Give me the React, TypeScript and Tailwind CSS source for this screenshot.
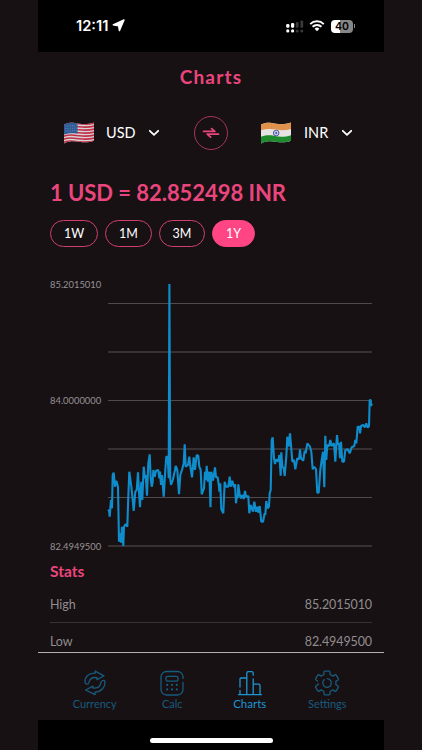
import type { ReactNode } from "react";

const LINE =
  "108,511 109,510 109.7,516.7 111,500 112,508.3 112.7,475 113.7,472.7 115,486.7 116.3,480.7 118,486.7 119,541.7 120.3,533 121,542.7 122,526.7 123.3,546 124,526.7 125.7,524 127.3,526.7 128.3,496.7 129.3,471.7 131.3,486.7 132.7,500 133.7,511 135.3,491.7 136.7,490 138,472.3 139,491.7 140,507.3 141.3,481.7 142.3,500 143.7,466.7 145,478.3 145.7,475 147,495.7 148.3,463.3 149.7,454.3 150.7,478.3 151.7,486.7 152.7,481.7 153.3,470 154.7,476.7 156,470.7 158.3,470 159.3,478.3 160,471.7 161,485 162,475 163.7,496.7 165.3,470 166.3,456.7 167.7,456.7 168.7,478.3 169.4,284 170.2,478.3 171,485 173,479.3 175,470 175.7,466 177.3,470 179,494.3 180.3,475 182,470 183.7,463.3 184.7,444.3 185.7,466.7 188,465 189.3,456.7 190.3,466 192,477.3 193.7,457.3 195,470 196.7,455 198.3,456 199.3,466.7 200.7,470 201.7,494.3 204,488.3 205,471.7 205.7,480 206.7,465.7 207.7,481.7 209.3,471.7 210.5,507.3 211.3,471.7 213,480.7 215,467.3 216,477.3 217.7,477.3 219,486.7 219.4,491.7 220.3,483.3 221.3,509.3 223.3,513.3 224.7,481.7 226,486.7 228.3,486.7 229.7,476.7 230.7,486.7 232.3,480.7 234,487.3 235,484 236,503.3 237,495 237.7,498.3 238.3,484.3 239.7,495 241,498.3 242.3,495 243.7,499 245,491 246,496.7 248.3,496 249.3,513.3 250.7,505 253,511.7 254.3,501.7 256,511.7 257.3,506.7 258.3,512.7 259.7,506 261.3,521.7 263,521.7 264.7,513.3 265.3,515 266.3,501 267.7,508.3 269,506.7 269.7,493.3 270.7,490 271.7,440 272.7,437.3 274,458.3 275,464 276.3,459.3 278.3,461.7 279.3,455 280.7,475.7 281.3,452.3 282.3,466.7 283.7,468.3 284.7,476 286.3,456.7 287.3,436.7 288.7,446.7 290,433.3 291,445 292.3,461.7 294,460 295.3,469.3 297.3,458.3 299,459.3 300,449.3 301,458.3 303.3,460.7 304.7,450.7 305.7,453.3 307.3,443.3 310,446.7 311.3,451.7 312.7,469.3 314.3,466.7 316,469.3 317.3,492.7 318.7,492.7 320.3,470 321.7,460 323,451.7 324.3,487.3 325.3,435.7 326.3,460 327.3,445 329.3,446 330.3,440 331.7,446 334,443.3 335.3,461.7 337,435 338,445 339,443.3 340,458.3 341,441.7 342.3,461.7 344,461.7 345.3,450 347.7,449.3 349.7,453.3 351.7,447.3 354.3,446 355.3,440 356.3,443.3 357.7,426.7 359.3,426.7 360,433.3 361,426 363,425 365,427.3 366.3,423.3 367.7,427.7 369,426 369.7,400 370.7,400 371,406 372,403.3";

const ranges = [
  { label: "1W", width: "w-[48px]" },
  { label: "1M", width: "w-[47px]" },
  { label: "3M", width: "w-[46px]" },
  { label: "1Y", width: "w-[43px]", active: true },
];

const FLAG_SHAPE = "M1 2.6C7 -0.6 12 1 16 1.8S26 2.6 31 0.6V18.8C26 21 20 20.4 16 19.8S7 18.6 1 21.4Z";

const UsFlag = () => (
  <svg width="32" height="22" viewBox="0 0 32 22">
    <clipPath id="us">
      <path d={FLAG_SHAPE} />
    </clipPath>
    <g clipPath="url(#us)">
      <rect width="32" height="22" fill="#d8d3d6" />
      {[0, 1, 2, 3, 4, 5, 6].map((i) => (
        <path
          key={i}
          d={`M0 ${2.4 + i * 3}C7 ${-0.2 + i * 3} 12 ${1.4 + i * 3} 16 ${1.8 + i * 3}S26 ${2.8 + i * 3} 32 ${0.8 + i * 3}`}
          fill="none"
          stroke="#c23046"
          strokeWidth="1.6"
        />
      ))}
      <path d="M0 0H14.5V11.6C10 11 5 10.8 0 13Z" fill="#2f5c97" />
      {[3.5, 6, 8.5].map((y) => (
        <path key={y} d={`M2.5 ${y + 0.5}L14 ${y}`} stroke="#8ba5c9" strokeWidth="0.7" strokeDasharray="0.8 1.4" />
      ))}
    </g>
  </svg>
);

const IndiaFlag = () => (
  <svg width="32" height="22" viewBox="0 0 32 22">
    <clipPath id="in">
      <path d={FLAG_SHAPE} />
    </clipPath>
    <g clipPath="url(#in)">
      <rect width="32" height="22" fill="#e6e3e2" />
      <path d="M0 0H32V6.7C26 8.8 20 8.2 16 7.6S7 6 0 8.6Z" fill="#e0924c" />
      <path d="M0 15.2C7 12.4 12 13.4 16 14.2S26 15 32 12.8V22H0Z" fill="#1f8a2e" />
    </g>
    <circle cx="16.2" cy="11" r="2.8" fill="#c9cbe2" stroke="#3b4a9c" strokeWidth="0.9" />
    <circle cx="16.2" cy="11" r="0.9" fill="#3b4a9c" />
  </svg>
);

const Chevron = () => (
  <svg width="12" height="8" viewBox="0 0 12 8" fill="none" stroke="#fff" strokeWidth="1.8" strokeLinecap="round" strokeLinejoin="round">
    <path d="M1.8 1.8L6 5.8L10.2 1.8" />
  </svg>
);

const StatusBar = () => (
  <div className="h-[52px] bg-black flex items-center justify-between pl-[38px] pr-[29px] text-white">
    <div className="flex items-center gap-[4px] font-['Inter',sans-serif] font-semibold text-[14.7px]">
      <span>12:11</span>
      <svg width="13" height="13" viewBox="0 0 13 13">
        <path d="M12 1L7.4 11.6L6.6 6.9L1.2 5.9Z" fill="#fff" stroke="#fff" strokeWidth="1.4" strokeLinejoin="round" />
      </svg>
    </div>
    <div className="flex items-center">
      <svg width="18" height="13" viewBox="0 0 18 13">
        <g fill="#fff">
          <rect x="0.2" y="4" width="3.2" height="3.8" rx="1.2" />
          <rect x="5" y="3" width="3.2" height="4.8" rx="1.2" />
          <circle cx="1.8" cy="10.9" r="1.6" />
          <circle cx="6.6" cy="10.9" r="1.6" />
        </g>
        <g fill="#3a3a3a">
          <rect x="9.8" y="2" width="2.8" height="5.8" rx="1" />
          <rect x="14.4" y="0.5" width="2.8" height="7.3" rx="1" />
          <circle cx="11.2" cy="10.9" r="1.5" />
          <circle cx="15.8" cy="10.9" r="1.5" />
        </g>
      </svg>
      <svg className="ml-[5px]" width="16" height="12" viewBox="0 0 16 12" fill="none" stroke="#fff" strokeWidth="2">
        <path d="M1.2 4.1A9.8 9.8 0 0 1 14.8 4.1" />
        <path d="M3.6 6.8A6.2 6.2 0 0 1 12.4 6.8" />
        <path d="M5.6 8.7A3.5 3.5 0 0 1 10.4 8.7L8 11.3Z" fill="#fff" stroke="none" />
      </svg>
      <div className="ml-[6px] w-[22px] h-[13px] pt-px rounded-[4px] bg-linear-to-r from-white from-42% to-[#868686] to-42% flex items-center justify-center font-['Inter',sans-serif] font-semibold text-[10.5px] leading-[12px] text-black">
        40
      </div>
      <div className="ml-px w-px h-[4px] bg-[#868686]" />
    </div>
  </div>
);

interface StatRowProps {
  className?: string;
  label: string;
  value: string;
}

const StatRow = ({ className = "", label, value }: StatRowProps) => (
  <div className={`flex items-center justify-between text-[12.5px] tracking-[-0.1px] leading-none text-[#918c8e] ${className}`}>
    <span>{label}</span>
    <span>{value}</span>
  </div>
);

const Chart = () => (
  <div className="mt-[29px] flex h-[276px] text-[9.4px] leading-none text-[#979294]">
    <div className="w-[54px] shrink-0 flex flex-col pt-[4px]">
      <span className="h-[10px]">85.2015010</span>
      <span className="mt-[106px] h-[10px]">84.0000000</span>
      <span className="mt-[136px] h-[10px]">82.4949500</span>
    </div>
    <svg className="shrink-0" width="272" height="276" viewBox="104 276 272 276" fill="none">
      {[303.5, 400.5, 497.5].map((y) => (
        <path key={y} d={`M108 ${y}H372`} stroke="#504a4c" />
      ))}
      {[352, 449, 546].map((y) => (
        <path key={y} d={`M108 ${y}H372`} stroke="#373133" strokeWidth="2" />
      ))}
      <polyline points={LINE} stroke="#0f8ccb" strokeWidth="2.1" strokeLinejoin="bevel" />
    </svg>
  </div>
);

interface TabProps {
  label: string;
  active?: boolean;
  children: ReactNode;
}

const Tab = ({ label, active, children }: TabProps) => (
  <div
    className={`flex-1 flex flex-col items-center pt-[17px] leading-[14px] ${
      active ? "text-[#1f94d4] text-[11.5px]" : "text-[#185b7f] text-[11px]"
    }`}
  >
    <svg width="26" height="26" viewBox="0 0 26 26" fill="none" stroke="currentColor" strokeWidth="1.3" strokeLinecap="round" strokeLinejoin="round">
      {children}
    </svg>
    <span className="mt-px">{label}</span>
  </div>
);

const TabBar = () => (
  <div className="h-[68px] border-t border-[#b3aeb0] flex px-[18px]">
    <Tab label="Currency">
      <path d="M3 12.2C2.6 7 7 2.8 13.2 3.2V1.2L22 5.8L15 9.8V7.6C10 7 7.6 9.4 7 12.4C6.2 15 3.4 14.4 3 12.2Z" />
      <path d="M22.8 11.2C23.8 17 19 22 13 22.2V24.6L3.6 20L11 16.2V18.2C15.6 18.4 18.2 16 18.8 12.8C19.4 10.6 22.2 9.4 22.8 11.2Z" />
    </Tab>
    <Tab label="Calc">
      <path d="M24 8.5V7A5.5 5.5 0 0 0 18.5 1.5H7.5A5.5 5.5 0 0 0 2 7V19.5A5.5 5.5 0 0 0 7.5 25H18.5A5.5 5.5 0 0 0 24 19.5V12.5" />
      <rect x="7" y="6.3" width="12" height="4.8" rx="1.6" />
      <path d="M8.2 14.8V14.9M13 14.8V14.9M17.8 14.8V14.9M8.2 19.4V19.5M13 19.4V19.5M17.8 19.4V19.5" strokeWidth="2.2" />
    </Tab>
    <Tab label="Charts" active>
      <path d="M3 17V9.2Q3 8 4.2 8H9.6M3 20.5V24.2M9.8 24.4V3Q9.8 1.6 11.2 1.6H14.8Q16.2 1.6 16.2 3V5.2M16.2 8.8V24.4M16.2 14.2H21.8Q23 14.2 23 15.4V24.4M1.5 24.6H24.5" />
    </Tab>
    <Tab label="Settings">
      <path d="M3.6 11L2 10Q1.2 9.4 1.7 8.6L3.8 5.2Q4.4 4.4 5.2 4.9L7.2 6.1L9.9 4.5V2.4Q9.9 1.2 11 1.2H15Q16.1 1.2 16.1 2.4V4.5L18.8 6.1L20.8 4.9Q21.6 4.4 22.2 5.2L24.3 8.6Q24.8 9.4 24 10L21.9 11.4V14.6L24 16Q24.8 16.6 24.3 17.4L22.2 20.8Q21.6 21.6 20.8 21.1L18.8 19.9L16.1 21.5V23.6Q16.1 24.8 15 24.8H11Q9.9 24.8 9.9 23.6V21.5L7.2 19.9L5.2 21.1Q4.4 21.6 3.8 20.8L1.7 17.4Q1.2 16.6 2 16L4.1 14.6V13.6" />
      <path d="M10.4 9.6A4.3 4.3 0 1 0 13.4 8.7" />
    </Tab>
  </div>
);

const App = () => {
  return (
    <div className="w-[422px] h-[750px] overflow-hidden bg-[#171113] flex justify-center font-['Lato',sans-serif]">
      <div className="w-[346px] flex flex-col">
        <StatusBar />
        <main className="h-[600px] px-[12px] pt-px">
          <h1 className="h-[49px] flex items-center justify-center text-[19px] font-bold tracking-[1.2px] text-[#ea467d]">
            Charts
          </h1>

          <div className="h-[61px] flex items-center text-[14.5px] text-white">
            <div className="w-[144px] flex items-center pl-[13px]">
              <UsFlag />
              <span className="ml-[11px] w-[42px] pt-px">USD</span>
              <Chevron />
            </div>
            <button className="w-[34px] h-[34px] shrink-0 rounded-full border border-[#a83460] flex items-center justify-center">
              <svg width="18" height="14" viewBox="0 0 18 14" fill="none" stroke="#ea467d" strokeWidth="1.8" strokeLinecap="round" strokeLinejoin="round">
                <path d="M1.6 5.4H12.8L9.6 2.6" />
                <path d="M16.4 8.2H5.2L8.6 11.2" />
              </svg>
            </button>
            <div className="flex items-center pl-[32px]">
              <IndiaFlag />
              <span className="ml-[12px] w-[37px] pt-px">INR</span>
              <Chevron />
            </div>
          </div>

          <h2 className="h-[57px] flex items-center pt-px text-[22px] font-bold tracking-[-0.05px] text-[#ea467d] whitespace-nowrap">
            1 USD = 82.852498 INR
          </h2>

          <div className="flex gap-[7px]">
            {ranges.map((r) => (
              <button
                key={r.label}
                className={`h-[27px] pt-[2px] rounded-full border text-[12.5px] leading-none text-white ${r.width} ${
                  r.active ? "bg-[#ff4583] border-[#ff4583]" : "border-[#d03f70]"
                }`}
              >
                {r.label}
              </button>
            ))}
          </div>

          <Chart />

          <h3 className="h-[38px] flex items-center pt-[2px] text-[15.5px] font-bold text-[#ea467d]">Stats</h3>
          <StatRow label="High" value="85.2015010" className="h-[33px] pb-[2px] border-b border-[#373133]" />
          <StatRow label="Low" value="82.4949500" className="h-[29px] pt-[10px]" />
        </main>
        <TabBar />
        <div className="h-[30px] bg-black flex justify-center pt-[18px]">
          <div className="w-[123px] h-[5px] rounded-full bg-white" />
        </div>
      </div>
    </div>
  );
};

export default App;
